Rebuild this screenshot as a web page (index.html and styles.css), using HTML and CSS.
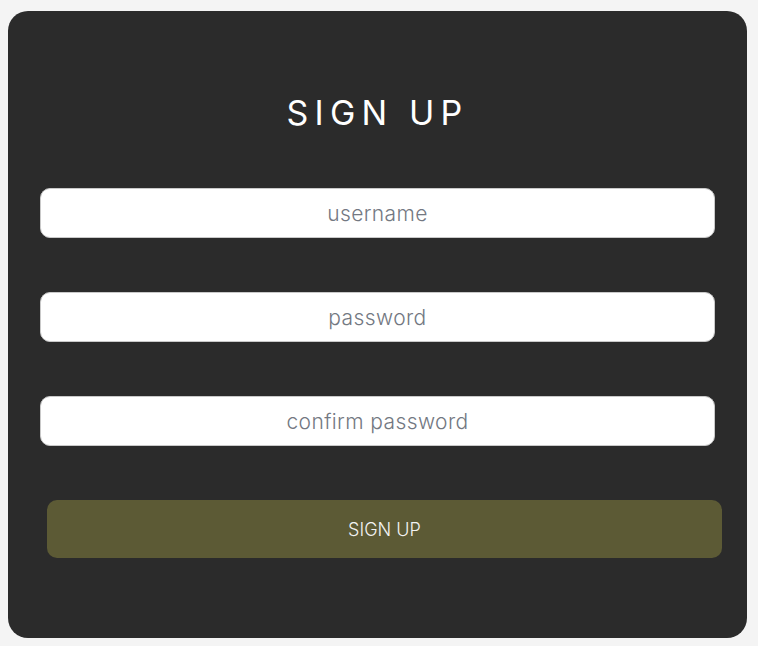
FILE: index.html
```html
<!DOCTYPE html>
<html>
<head>
<meta charset="utf-8">
<link rel="stylesheet" href="styles.css">
</head>
<body>
<div class="card">
  <h1 class="title">SIGN UP</h1>
  <form class="form">
    <input class="field" type="text" placeholder="username">
    <input class="field" type="password" placeholder="password">
    <input class="field" type="password" placeholder="confirm password">
    <button class="btn" type="button">SIGN UP</button>
  </form>
</div>
</body>
</html>
```
FILE: styles.css
```css
html, body {
  margin: 0;
  padding: 0;
  background: #f4f4f4;
}
body {
  padding: 11px 11px 8px 8px;
  font-family: "Inter", "Noto Sans", sans-serif;
}
.card {
  width: 739px;
  height: 627px;
  box-sizing: border-box;
  background: #2b2b2b;
  border-radius: 20px;
  padding: 82px 32px 0 32px;
}
.title {
  margin: 0;
  text-align: center;
  color: #ffffff;
  font-weight: 400;
  font-size: 34px;
  letter-spacing: 6.2px;
  line-height: 40px;
}
.form {
  display: flex;
  flex-direction: column;
  margin-top: 55px;
}
.field {
  height: 50px;
  box-sizing: border-box;
  border: 1px solid #c9c9c9;
  border-radius: 10px;
  background: #fff;
  text-align: center;
  font-family: inherit;
  font-size: 21px;
  letter-spacing: 0.4px;
  color: #737882;
  margin-bottom: 54px;
  outline: none;
  padding: 0;
}
.field::placeholder {
  color: #737882;
  font-weight: 300;
}
.btn {
  margin-left: 7px;
  margin-top: 0;
  width: 675px;
  height: 58px;
  border: none;
  border-radius: 10px;
  background: #5c5a35;
  color: #f2f2f2;
  font-family: inherit;
  font-size: 18px;
  font-weight: 300;
}
```
